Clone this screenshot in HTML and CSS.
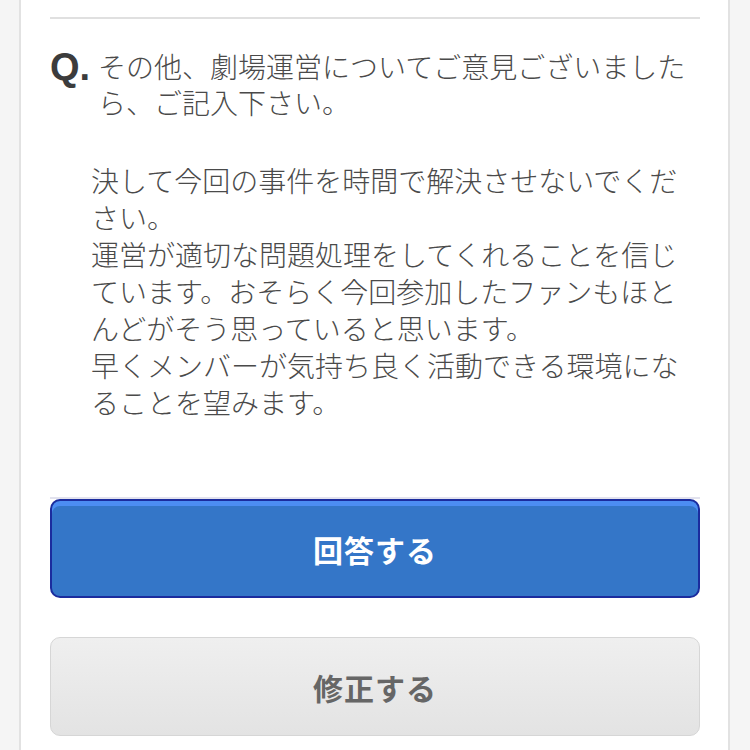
FILE: index.html
```
<!DOCTYPE html>
<html lang="ja">
<head>
<meta charset="utf-8">
<link rel="stylesheet" href="styles.css">
</head>
<body>
<div class="card">
  <div class="rule-top"></div>
  <div class="question">
    <span class="q-mark">Q.</span>
    <p class="q-text">その他、劇場運営についてご意見ございましたら、ご記入下さい。</p>
  </div>
  <div class="answer">
    <p>決して今回の事件を時間で解決させないでください。</p>
    <p>運営が適切な問題処理をしてくれることを信じています。おそらく今回参加したファンもほとんどがそう思っていると思います。</p>
    <p>早くメンバーが気持ち良く活動できる環境になることを望みます。</p>
  </div>
  <div class="rule-bottom"></div>
  <button class="btn btn-primary">回答する</button>
  <button class="btn btn-secondary">修正する</button>
</div>
</body>
</html>
```

FILE: styles.css
```
html, body {
  margin: 0;
  padding: 0;
}
body {
  background: #f5f5f5;
  font-family: "Noto Sans CJK JP", "Noto Sans", sans-serif;
  color: #4f4f4f;
  height: 750px;
  overflow: hidden;
}
.card {
  margin: 0 20px 0 19px;
  background: #ffffff;
  border-left: 2px solid #e2e2e2;
  border-right: 2px solid #e2e2e2;
  padding: 17px 28px 40px 29px;
  min-height: 750px;
  box-sizing: border-box;
}
.rule-top {
  height: 2px;
  background: #e0e0e0;
}
.question {
  display: flex;
  align-items: flex-start;
  padding-top: 29px;
}
.q-mark {
  flex: 0 0 48px;
  font-family: "Liberation Sans", Arial, sans-serif;
  font-weight: bold;
  font-size: 38px;
  line-height: 36px;
  color: #3c3c3c;
  padding-top: 1px;
}
.q-text {
  margin: 0;
  font-size: 28px;
  font-weight: 300;
  line-height: 36px;
  color: #4a4a4a;
}
.answer {
  padding: 42px 0 0 41px;
  font-size: 28px;
  font-weight: 300;
  line-height: 37px;
  color: #4a4a4a;
}
.answer p {
  margin: 0;
}
.rule-bottom {
  margin-top: 76px;
  height: 2px;
  background: #e2e2ee;
}
.btn {
  display: block;
  width: 100%;
  height: 99px;
  border-radius: 10px;
  font-family: "Noto Sans CJK JP", "Noto Sans", sans-serif;
  font-weight: bold;
  font-size: 30px;
  letter-spacing: 1px;
  padding: 0;
  cursor: pointer;
}
.btn-primary {
  margin-top: 0;
  background: #3476c8;
  border: 2px solid #1b2c9e;
  box-shadow: inset 0 5px 0 #4c8df2;
  color: #ffffff;
}
.btn-secondary {
  margin-top: 39px;
  background: linear-gradient(#efefef, #e3e3e3);
  border: 1px solid #d6d6d6;
  color: #666666;
}
```
